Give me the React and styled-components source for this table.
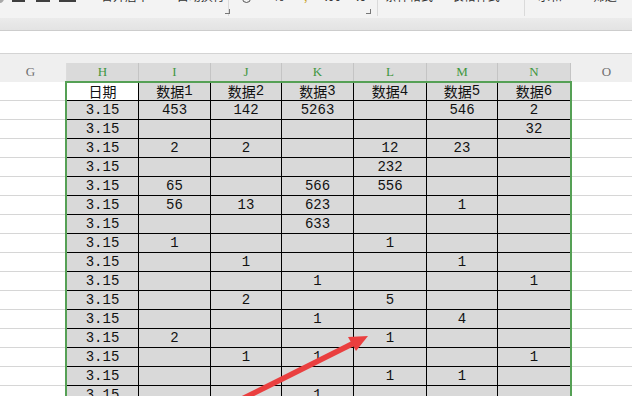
import React from "react";
import styled, { createGlobalStyle } from "styled-components";

const GlobalStyle = createGlobalStyle`
  html, body { margin: 0; padding: 0; background: #fff; overflow: hidden; }
  #root { width: 632px; height: 396px; }
`;

const Page = styled.div`
  position: relative;
  width: 632px;
  height: 396px;
  overflow: hidden;
  background: #fff;
  display: flex;
  flex-direction: column;
  font-family: "Noto Sans CJK SC", sans-serif;
`;

const Ribbon = styled.div`
  flex: none;
  height: 18px;
  background: #f3f3f3;
  display: flex;
  overflow: hidden;
`;

const RibbonGroup = styled.div`
  flex: none;
  width: ${(p) => p.$w}px;
  height: 16px;
  display: flex;
  align-items: flex-start;
  gap: ${(p) => p.$gap ?? 10}px;
  padding-left: ${(p) => p.$pl ?? 0}px;
  box-sizing: border-box;
  border-right: ${(p) => (p.$last ? "none" : "1px solid #dadada")};
`;

const ToolLabel = styled.span`
  flex: none;
  font-size: 12px;
  line-height: 14px;
  margin-top: -11px;
  margin-left: ${(p) => p.$ml ?? 0}px;
  color: ${(p) => p.$color || "#333"};
  white-space: nowrap;
`;

const BarIcon = styled.span`
  flex: none;
  width: ${(p) => p.$w ?? 14}px;
  height: 2px;
  background: #3f3f3f;
  margin-left: ${(p) => p.$ml ?? 0}px;
`;

const RoundIcon = styled.span`
  flex: none;
  width: 9px;
  height: 9px;
  margin-top: -6px;
  margin-left: ${(p) => p.$ml ?? 0}px;
  border-radius: 50%;
  box-sizing: border-box;
  border: ${(p) => (p.$fill ? "none" : "1.5px solid #555")};
  background: ${(p) => (p.$fill ? "#a8a8a8" : "transparent")};
`;

const Corner = styled.span`
  flex: none;
  align-self: flex-end;
  margin-bottom: 2px;
  margin-left: auto;
  margin-right: 7px;
  width: 4px;
  height: 4px;
  border-right: 1px solid #777;
  border-bottom: 1px solid #777;
`;

const Strip = styled.div`
  flex: none;
  height: 12px;
  background: linear-gradient(#ebebeb, #e3e3e3);
  border-bottom: 1px solid #cdcdcd;
`;

const FormulaBar = styled.div`
  flex: none;
  height: 22px;
  background: #fff;
  border-bottom: 1px solid #d4d4d4;
`;

const Gap = styled.div`
  flex: none;
  height: 9px;
  background: #efefef;
`;

const Sheet = styled.div`
  position: relative;
  flex: none;
  margin-left: -5px;
  display: grid;
  grid-template-columns: 72px 72px 72px 71px 72px 73px 71px 73px 72px;
  grid-auto-rows: 19px;
`;

const ColHead = styled.div`
  box-sizing: border-box;
  background: ${(p) => (p.$sel ? "#dadada" : "#efefef")};
  color: ${(p) => (p.$sel ? "#3f963f" : "#6f6f6f")};
  border-right: 1px solid ${(p) => (p.$sel ? "#c4c4c4" : "#dcdcdc")};
  font-family: "Liberation Serif", serif;
  font-size: 13px;
  display: flex;
  align-items: center;
  justify-content: center;
  padding-bottom: 1px;
`;

const Cell = styled.div`
  box-sizing: border-box;
  display: flex;
  align-items: center;
  justify-content: center;
  font-family: "Liberation Mono", "Noto Sans CJK SC", monospace;
  font-size: 14px;
  color: #111;
  white-space: nowrap;
  overflow: hidden;
  background: ${(p) =>
    p.$kind === "active" ? "#fff" : p.$kind === "sel" ? "#d9d9d9" : "#fff"};
  border-bottom: 1px solid
    ${(p) => (p.$kind === "side" ? "#d6d6d6" : "#000")};
  border-right: 1px solid
    ${(p) => (p.$kind === "side" ? "transparent" : "#000")};
`;

const CjkText = styled.span`
  font-family: "Noto Sans CJK SC", sans-serif;
  font-size: 14px;
  line-height: 1;
`;

const SelectionFrame = styled.div`
  position: absolute;
  left: 70px;
  top: 18px;
  width: 507px;
  height: 400px;
  box-sizing: border-box;
  border: 2px solid #55a055;
  pointer-events: none;
`;

const ArrowLayer = styled.svg`
  position: absolute;
  left: 0;
  top: 0;
  width: 632px;
  height: 396px;
  pointer-events: none;
`;

const cols = ["G", "H", "I", "J", "K", "L", "M", "N", "O"];

const rows = [
  ["日期", "数据1", "数据2", "数据3", "数据4", "数据5", "数据6"],
  ["3.15", "453", "142", "5263", "", "546", "2"],
  ["3.15", "", "", "", "", "", "32"],
  ["3.15", "2", "2", "", "12", "23", ""],
  ["3.15", "", "", "", "232", "", ""],
  ["3.15", "65", "", "566", "556", "", ""],
  ["3.15", "56", "13", "623", "", "1", ""],
  ["3.15", "", "", "633", "", "", ""],
  ["3.15", "1", "", "", "1", "", ""],
  ["3.15", "", "1", "", "", "1", ""],
  ["3.15", "", "", "1", "", "", "1"],
  ["3.15", "", "2", "", "5", "", ""],
  ["3.15", "", "", "1", "", "4", ""],
  ["3.15", "2", "", "", "1", "", ""],
  ["3.15", "", "1", "1", "", "", "1"],
  ["3.15", "", "", "", "1", "1", ""],
  ["3.15", "", "", "1", "", "", ""],
];

function renderText(t) {
  const m = t.match(/^([\u4e00-\u9fff]+)(.*)$/);
  if (m) {
    return (
      <>
        <CjkText>{m[1]}</CjkText>
        {m[2]}
      </>
    );
  }
  return t;
}

export default function App() {
  return (
    <Page>
      <GlobalStyle />
      <Ribbon>
        <RibbonGroup $w={229} $gap={0}>
          <RoundIcon $fill $ml={-5} />
          <BarIcon $ml={8} $w={13} />
          <BarIcon $ml={11} $w={14} />
          <BarIcon $ml={9} $w={17} />
          <ToolLabel $ml={25}>合并居中 ·</ToolLabel>
          <ToolLabel $ml={13}>自动换行</ToolLabel>
          <Corner />
        </RibbonGroup>
        <RibbonGroup $w={149} $gap={0}>
          <RoundIcon $ml={13} />
          <ToolLabel $ml={22}>%</ToolLabel>
          <ToolLabel $ml={20} $color="#c9a227">,</ToolLabel>
          <ToolLabel $ml={17}>.00</ToolLabel>
          <ToolLabel $ml={3}>→.0</ToolLabel>
          <Corner />
        </RibbonGroup>
        <RibbonGroup $w={147} $gap={4} $pl={7}>
          <ToolLabel>条件格式 ·</ToolLabel>
          <ToolLabel>表格样式 ·</ToolLabel>
        </RibbonGroup>
        <RibbonGroup $w={110} $gap={16} $pl={13} $last>
          <ToolLabel>求和 ·</ToolLabel>
          <ToolLabel>筛选 ·</ToolLabel>
          <ToolLabel>排</ToolLabel>
        </RibbonGroup>
      </Ribbon>
      <Strip />
      <FormulaBar />
      <Gap />
      <Sheet>
        {cols.map((c, i) => (
          <ColHead key={c} $sel={i > 0 && i < 8}>
            {c}
          </ColHead>
        ))}
        {rows.map((r, ri) => (
          <React.Fragment key={ri}>
            <Cell $kind="side" />
            {r.map((v, ci) => (
              <Cell key={ci} $kind={ri === 0 && ci === 0 ? "active" : "sel"}>
                {renderText(v)}
              </Cell>
            ))}
            <Cell $kind="side" />
          </React.Fragment>
        ))}
        <SelectionFrame />
      </Sheet>
      <ArrowLayer viewBox="0 0 632 396">
        <line
          x1="236"
          y1="402"
          x2="354"
          y2="343"
          stroke="#ea3f3f"
          strokeWidth="5.5"
        />
        <polygon points="368,336 348,337 356,351" fill="#ea3f3f" />
      </ArrowLayer>
    </Page>
  );
}
